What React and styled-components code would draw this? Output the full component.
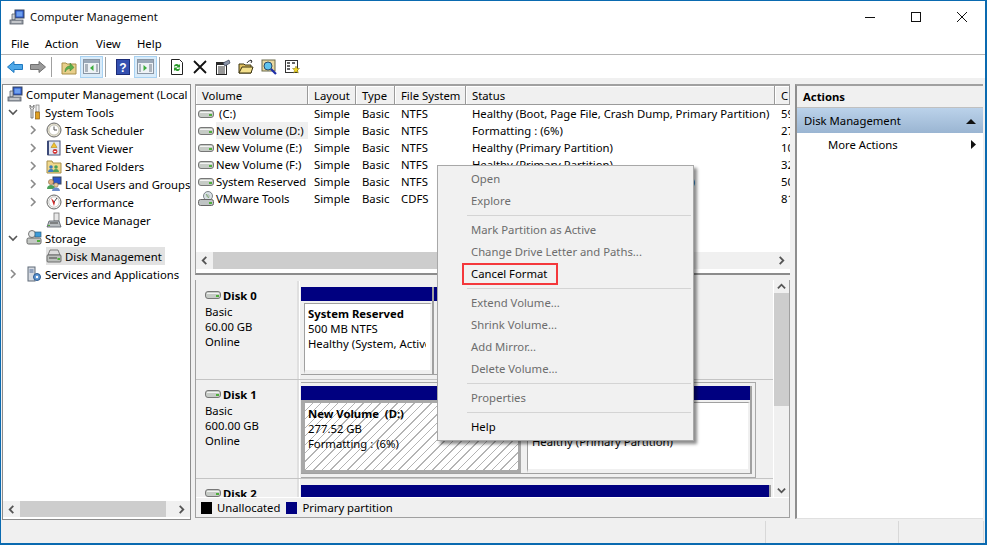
import React from 'react'
import styled, { createGlobalStyle } from 'styled-components'

const GlobalStyle = createGlobalStyle`
  html, body { margin: 0; padding: 0; background: #fff; }
  body { font-family: "Noto Sans", "Open Sans", sans-serif; font-size: 11.3px; color: #000; }
  * { box-sizing: border-box; }
`

const Window = styled.div`
  width: 987px;
  height: 545px;
  display: flex;
  flex-direction: column;
  background: #f0f0f0;
  border-style: solid;
  border-color: #0a6ab0;
  border-width: 1px 2px 2px 1px;
  overflow: hidden;
`
const TitleBar = styled.div`
  height: 31px;
  flex: none;
  display: flex;
  align-items: center;
  background: #fff;
  padding-left: 8px;
  gap: 5px;
`
const TitleText = styled.span`
  flex: 1;
  color: #111;
`
const WinControls = styled.div`
  display: flex;
`
const WinButton = styled.div`
  width: 46px;
  height: 31px;
  display: flex;
  align-items: center;
  justify-content: center;
`
const MenuBar = styled.div`
  height: 23px;
  flex: none;
  display: flex;
  align-items: center;
  background: #fff;
  border-bottom: 1px solid #b4b4b4;
  padding-left: 10px;
`
const MenuLabel = styled.span`
  width: ${p => p.$w}px;
`
const Toolbar = styled.div`
  height: 23px;
  flex: none;
  display: flex;
  align-items: center;
  background: #fff;
  padding-left: 2px;
`
const ToolButton = styled.div`
  width: 23px;
  height: 22px;
  display: flex;
  align-items: center;
  justify-content: center;
  ${p => p.$on && 'background: #d9ebf9; border: 1px solid #a8d2f2;'}
`
const ToolSep = styled.div`
  width: 1px;
  height: 20px;
  margin: 0 5px 0 2px;
  background: #a0a0a0;
`
const Body = styled.div`
  flex: 1;
  min-height: 0;
  display: flex;
  padding: 6px 0 1px 1px;
`
const TreePanel = styled.div`
  width: 189px;
  flex: none;
  display: flex;
  flex-direction: column;
  padding-bottom: 2px;
  background: #fff;
  border: 1px solid #8c8c8c;
`
const TreeList = styled.div`
  flex: 1;
  overflow: hidden;
`
const TreeRow = styled.div`
  height: 18px;
  display: flex;
  align-items: center;
  white-space: nowrap;
  padding-left: ${p => p.$pad}px;
`
const Chevron = styled.div`
  width: 18px;
  flex: none;
  display: flex;
  align-items: center;
  justify-content: flex-start;
`
const TreeLabel = styled.div`
  display: flex;
  align-items: center;
  gap: 3px;
  height: 18px;
  padding-right: 3px;
  background: ${p => (p.$sel ? '#e2e2e2' : 'transparent')};
`
const HScroll = styled.div`
  height: 16px;
  flex: none;
  display: flex;
  align-items: center;
  background: #f0f0f0;
`
const ScrollArrow = styled.div`
  width: 17px;
  height: 16px;
  flex: none;
  display: flex;
  align-items: center;
  justify-content: center;
`
const HThumb = styled.div`
  height: 100%;
  width: ${p => p.$w}px;
  background: #cdcdcd;
`
const HSpacer = styled.div`
  flex: 1;
`
const Center = styled.div`
  width: 595px;
  flex: none;
  margin-left: 4px;
  display: flex;
  flex-direction: column;
`
const ListPanel = styled.div`
  height: 191px;
  flex: none;
  display: flex;
  flex-direction: column;
  background: #fff;
  border-top: 2px solid #a0a0a0;
  border-left: 1px solid #a0a0a0;
  border-bottom: 2px solid #8c8c8c;
`
const HeaderRow = styled.div`
  display: grid;
  grid-template-columns: 112px 48px 39px 71px 309px 15px;
  height: 19px;
  flex: none;
  background: #f0f0f0;
`
const HeaderCell = styled.div`
  padding-left: 6px;
  line-height: 20px;
  overflow: hidden;
  white-space: nowrap;
  border-right: 1px solid #9a9a9a;
  border-bottom: 1px solid #9a9a9a;
  box-shadow: inset 1px 1px 0 #fff;
`
const Rows = styled.div`
  flex: 1;
`
const DataRow = styled.div`
  display: grid;
  grid-template-columns: 112px 48px 39px 71px 309px 15px;
  height: 17px;
`
const NameCell = styled.div`
  display: flex;
  align-items: center;
  height: 17px;
  padding-left: 2px;
  white-space: nowrap;
`
const NameText = styled.span`
  flex: 1;
  line-height: 17px;
  margin-left: 2px;
  padding-left: ${p => p.$indent || 0}px;
  background: ${p => (p.$sel ? '#f0f0f0' : 'transparent')};
`
const Cell = styled.div`
  padding-left: 6px;
  line-height: 17px;
  overflow: hidden;
  white-space: nowrap;
`
const ListScroll = styled(HScroll)`
  height: 17px;
  margin-bottom: 4px;
`
const DiskPanel = styled.div`
  flex: 1;
  min-height: 0;
  margin: 5px 0 2px;
  display: flex;
  flex-direction: column;
  border-left: 1px solid #a0a0a0;
  border-right: 1px solid #a0a0a0;
  border-bottom: 1px solid #a0a0a0;
`
const DiskBody = styled.div`
  flex: 1;
  min-height: 0;
  display: flex;
`
const DiskList = styled.div`
  flex: 1;
  min-width: 0;
  overflow: hidden;
`
const DiskRow = styled.div`
  height: 99px;
  display: flex;
  border-top: 1px solid #c4c4c4;
  &:first-child { border-top: 1px solid #f0f0f0; }
`
const DiskInfo = styled.div`
  width: 103px;
  flex: none;
  padding: 6px 0 0 9px;
  line-height: 15px;
  border-right: 2px solid #e0e0e0;
  box-shadow: 1px 0 0 #fff;
`
const DiskName = styled.div`
  display: flex;
  align-items: center;
  gap: 2px;
  height: 17px;
  padding-bottom: 1px;
  font-weight: 700;
`
const Layout = styled.div`
  flex: 1;
  min-width: 0;
  padding: 6px 0 0 2px;
`
const Partitions = styled.div`
  display: flex;
  width: ${p => p.$w}px;
`
const FramedPartitions = styled(Partitions)`
  margin-top: -4px;
  padding: 3px 0;
  border-top: 1px solid #a8a8a8;
  border-right: 1px solid #a8a8a8;
  border-bottom: 1px solid #a8a8a8;
`
const Partition = styled.div`
  width: ${p => p.$w}px;
  flex: none;
  height: 88px;
  display: flex;
  flex-direction: column;
  border-right: 2px solid #a0a0a0;
  border-bottom: 1px solid #a0a0a0;
`
const NavyBar = styled.div`
  height: 14px;
  flex: none;
  background: #000080;
`
const VolumeBox = styled.div`
  flex: 1;
  min-width: 0;
  margin: 2px 0 0 3px;
  padding: 2px 4px 0 3px;
  line-height: 15px;
  overflow: hidden;
  background: #fff;
  border-style: solid;
  border-color: #a0a0a0 #f0f0f0 #f0f0f0 #a0a0a0;
  border-width: 1px 2px 4px 1px;
`
const HatchedBox = styled(VolumeBox)`
  width: 220px;
  flex: none;
  margin: 0;
  padding: 3px 0 0 3px;
  background: repeating-linear-gradient(135deg, #fff 0 5px, #b4b4b4 5px 6px);
  border-color: #a8a8a8;
  border-width: 3px 3px 3px 4px;
`
const SecondBox = styled(VolumeBox)`
  margin-left: 6px;
  padding: 1px 0 0 4px;
`
const PartitionSplit = styled.div`
  flex: 1;
  display: flex;
`
const VolumeName = styled.div`
  font-weight: 700;
  white-space: nowrap;
  overflow: hidden;
`
const VolumeLine = styled.div`
  white-space: nowrap;
  overflow: hidden;
`
const VScroll = styled.div`
  width: 15px;
  flex: none;
  display: flex;
  flex-direction: column;
  background: #f0f0f0;
  box-shadow: -1px 0 0 #fff;
`
const VArrow = styled.div`
  height: 13px;
  flex: none;
  display: flex;
  align-items: center;
  justify-content: center;
`
const VThumb = styled.div`
  height: 113px;
  flex: none;
  background: #cdcdcd;
`
const VSpacer = styled.div`
  flex: 1;
`
const Legend = styled.div`
  height: 20px;
  flex: none;
  display: flex;
  align-items: center;
  padding-left: 5px;
  background: #f0f0f0;
  border-top: 1px solid #fff;
`
const Swatch = styled.div`
  width: 11px;
  height: 12px;
  background: ${p => p.$c};
  margin-right: 5px;
`
const LegendText = styled.span`
  margin-right: 6px;
`
const ActionsPanel = styled.div`
  flex: 1;
  margin: 0 2px 1px 5px;
  display: flex;
  flex-direction: column;
  background: #fff;
  border-top: 2px solid #a0a0a0;
  border-left: 2px solid #8e8e8e;
  border-bottom: 1px solid #e0e0e0;
`
const ActionsHead = styled.div`
  height: 22px;
  flex: none;
  padding-left: 6px;
  line-height: 21px;
  font-weight: 700;
  background: #f0f0f0;
  border-bottom: 1px solid #c0c0c0;
`
const ActionsBar = styled.div`
  height: 25px;
  flex: none;
  display: flex;
  align-items: center;
  justify-content: space-between;
  padding: 0 7px;
  background: linear-gradient(#bbd2ea, #9ab5d2);
`
const ActionItem = styled.div`
  height: 22px;
  display: flex;
  align-items: center;
  justify-content: space-between;
  padding: 0 7px 0 31px;
`
const StatusBar = styled.div`
  height: 22px;
  flex: none;
  display: flex;
  justify-content: flex-end;
  padding-right: 1px;
`
const StatusCell = styled.div`
  width: ${p => p.$w}px;
  border-left: 1px solid #d8d8d8;
  ${p => p.$end && 'border-right: 1px solid #d8d8d8;'}
`
const ContextMenu = styled.div`
  position: absolute;
  left: 437px;
  top: 165px;
  width: 257px;
  padding: 2px;
  background: #f1f1f1;
  border: 1px solid #a8a8a8;
  box-shadow: 3px 3px 3px rgba(0, 0, 0, 0.45);
`
const MenuItem = styled.div`
  position: relative;
  height: 22px;
  line-height: 22px;
  padding-left: 31px;
  color: ${p => (p.$off ? '#6d6d6d' : '#000')};
`
const MenuSep = styled.div`
  height: 1px;
  margin: 3px 0 3px 27px;
  background: #d4d4d4;
`
const RedBox = styled.div`
  position: absolute;
  left: 22px;
  top: 0;
  width: 96px;
  height: 22px;
  border: 2px solid #f4383c;
`

const Svg = ({ size = 16, children }) => (
  <svg width={size} height={size} viewBox="0 0 16 16" style={{ flex: 'none', display: 'block' }}>{children}</svg>
)

const ChevronIcon = ({ open, color = '#8a8a8a' }) => (
  <svg width="10" height="10" viewBox="0 0 10 10">
    <path d={open ? 'M1 3l4 4 4-4' : 'M3 1l4 4-4 4'} fill="none" stroke={open ? '#555' : color} strokeWidth="1.6" />
  </svg>
)
const ArrowIcon = ({ d }) => (
  <svg width="9" height="9" viewBox="0 0 10 10">
    <path d={d} fill="none" stroke="#555" strokeWidth="2" />
  </svg>
)

const ComputerIcon = () => (
  <Svg>
    <rect x="6" y="1" width="9" height="8" fill="#2a55c8" stroke="#38465c" />
    <rect x="7.5" y="2.5" width="6" height="5" fill="#6ea0ee" />
    <path d="M3 5h3v6H3z" fill="#c9ccd2" stroke="#5e6470" strokeWidth=".8" />
    <rect x="1" y="11" width="13" height="4" fill="#9fa4ac" stroke="#565c66" strokeWidth=".8" />
    <path d="M3 13h9" stroke="#e8e8e8" />
  </Svg>
)
const DriveIcon = () => (
  <Svg>
    <rect x="0.5" y="4.5" width="15" height="7" rx="2.5" fill="#c6cbc6" stroke="#777" />
    <path d="M2 6.5h12" stroke="#f2f2f2" />
    <rect x="11" y="8" width="3" height="2" fill="#4fae3c" />
  </Svg>
)
const CdIcon = () => (
  <Svg>
    <circle cx="10" cy="5" r="4.5" fill="#d8e0e4" stroke="#7c8488" />
    <circle cx="10" cy="5" r="1.2" fill="#fff" stroke="#7c8488" strokeWidth=".6" />
    <path d="M8 3l3 4" stroke="#7fb070" />
    <rect x="0.5" y="8.5" width="15" height="6" rx="2" fill="#bfc4c4" stroke="#666" />
    <rect x="11" y="11" width="3" height="2" fill="#4fae3c" />
  </Svg>
)
const ToolsIcon = () => (
  <Svg>
    <path d="M4 1v3l1 1v9h2V5l1-1V1L7 3H5z" fill="#e8e8e8" stroke="#666" strokeWidth=".8" />
    <rect x="10" y="1" width="3" height="7" fill="#f2f2f2" stroke="#777" strokeWidth=".7" />
    <rect x="9.5" y="8" width="4" height="7" fill="#e0a020" stroke="#8a5a10" strokeWidth=".7" />
  </Svg>
)
const ClockIcon = () => (
  <Svg>
    <circle cx="8" cy="8" r="7" fill="#e4e0d0" stroke="#6a6a6a" />
    <circle cx="8" cy="8" r="5" fill="#fff" stroke="#b4b4a4" strokeWidth=".7" />
    <path d="M8 4.5V8h3" fill="none" stroke="#555" />
  </Svg>
)
const EventIcon = () => (
  <Svg>
    <rect x="2" y="1" width="12" height="14" fill="#dfe4f0" stroke="#49557a" />
    <path d="M2 1v14" stroke="#3c4a78" strokeWidth="2" />
    <path d="M8 2.5l3 5H5z" fill="#f4c430" stroke="#9a7a10" strokeWidth=".5" />
    <circle cx="9" cy="11.5" r="2.4" fill="#d23838" />
    <path d="M7.8 11.5h2.4" stroke="#fff" />
  </Svg>
)
const SharedIcon = () => (
  <Svg>
    <path d="M1 3h5l1 2h8v10H1z" fill="#f0d88c" stroke="#a8904c" />
    <circle cx="5" cy="9" r="1.8" fill="#3a7ac0" />
    <path d="M2 14c0-2 1.5-3 3-3s3 1 3 3z" fill="#3a7ac0" />
    <circle cx="10" cy="9" r="1.8" fill="#4aa05a" />
    <path d="M7 14c0-2 1.5-3 3-3s3 1 3 3z" fill="#4aa05a" />
  </Svg>
)
const UsersIcon = () => (
  <Svg>
    <rect x="7" y="1" width="8" height="7" fill="#2a55c8" stroke="#38465c" />
    <circle cx="5" cy="6" r="2.6" fill="#e0b080" stroke="#7a5a38" strokeWidth=".5" />
    <path d="M1 13c0-3 2-4 4-4s4 1 4 4z" fill="#4aa05a" />
    <circle cx="10" cy="9" r="2.2" fill="#e8c8a0" stroke="#7a5a38" strokeWidth=".5" />
    <path d="M6 15c0-2.5 2-3.5 4-3.5s4 1 4 3.5z" fill="#6a8cc8" />
  </Svg>
)
const PerfIcon = () => (
  <Svg>
    <circle cx="8" cy="8" r="7" fill="#f4f4f0" stroke="#666" />
    <circle cx="8" cy="8" r="5.2" fill="#fff" stroke="#aaa" strokeWidth=".6" />
    <path d="M5 4l4 4-1 4z" fill="#d02828" />
    <path d="M11 4L8 8" stroke="#444" />
  </Svg>
)
const DeviceIcon = () => (
  <Svg>
    <rect x="8" y="1" width="5" height="8" fill="#e8e8e8" stroke="#777" strokeWidth=".8" />
    <path d="M1 15l2-6h10l2 6z" fill="#b8bcc0" stroke="#565c66" strokeWidth=".8" />
    <path d="M4 11h8" stroke="#444" />
    <rect x="2" y="13" width="2" height="1" fill="#4fae3c" />
  </Svg>
)
const StorageIcon = () => (
  <Svg>
    <circle cx="6" cy="4" r="3.5" fill="#dfe3e3" stroke="#777" />
    <rect x="9" y="2" width="6" height="5" fill="#3a9ad8" stroke="#35607c" strokeWidth=".7" />
    <rect x="1" y="8" width="14" height="6" rx="1.5" fill="#c4c8c4" stroke="#666" />
    <rect x="11" y="10" width="3" height="2" fill="#4fae3c" />
  </Svg>
)
const DiskMgmtIcon = () => (
  <Svg>
    <path d="M2 7l2-5h8l2 5z" fill="#dcdcdc" stroke="#666" strokeWidth=".8" />
    <rect x="1" y="7" width="14" height="7" rx="1" fill="#bcbfbc" stroke="#555" strokeWidth=".8" />
    <path d="M3 10h8" stroke="#444" />
    <rect x="11.5" y="10" width="2.5" height="2" fill="#4fae3c" />
  </Svg>
)
const ServicesIcon = () => (
  <Svg>
    <rect x="2" y="1" width="7" height="14" fill="#d6dae0" stroke="#5f6a78" />
    <path d="M3.5 4h4M3.5 6h4" stroke="#4a6a9c" />
    <circle cx="11" cy="11" r="3.5" fill="#5a92d0" stroke="#2c5a90" />
    <circle cx="11" cy="11" r="1.2" fill="#fff" />
  </Svg>
)

const BackIcon = () => (
  <Svg>
    <path d="M0.5 8L7 2.5V5.5h8.5v5H7v3z" fill="#4ea8e8" stroke="#1e78c0" />
  </Svg>
)
const ForwardIcon = () => (
  <Svg>
    <path d="M15.5 8L9 2.5V5.5H.5v5H9v3z" fill="#9a9a9a" stroke="#707070" />
  </Svg>
)
const UpIcon = () => (
  <Svg>
    <path d="M1 4h4l1 1h9v10H1z" fill="#e8cf8a" stroke="#a88e48" />
    <path d="M4 13c0-4 2-6 5-6V4l4 4.5L9 12V9.5c-2 0-4 1.5-5 3.5z" fill="#5cb04c" stroke="#3a8030" strokeWidth=".5" />
  </Svg>
)
const PaneLeftIcon = () => (
  <svg width="17" height="15" viewBox="0 0 17 15">
    <rect x=".5" y=".5" width="16" height="14" fill="#eef2f6" stroke="#8a96a4" />
    <rect x="1" y="1" width="15" height="3" fill="#9aa8b8" />
    <path d="M2 6h3M2 8h3M2 10h3M2 12h3M13 6h2M13 8h2M13 10h2M13 12h2" stroke="#6a7684" />
    <path d="M10.5 6v6l-3.5-3z" fill="#3cab3c" />
  </svg>
)
const PaneRightIcon = () => (
  <svg width="17" height="15" viewBox="0 0 17 15">
    <rect x=".5" y=".5" width="16" height="14" fill="#eef2f6" stroke="#8a96a4" />
    <rect x="1" y="1" width="15" height="3" fill="#9aa8b8" />
    <path d="M2 6h2M2 8h2M2 10h2M2 12h2M12 6h3M12 8h3M12 10h3M12 12h3" stroke="#6a7684" />
    <path d="M6.5 6v6l3.5-3z" fill="#3cab3c" />
  </svg>
)
const HelpIcon = () => (
  <svg width="14" height="16" viewBox="0 0 14 16">
    <rect x=".5" y=".5" width="13" height="15" fill="#3450b0" stroke="#1c2c78" />
    <text x="7" y="12.5" fontSize="12" fontWeight="700" fill="#fff" textAnchor="middle" fontFamily="Liberation Sans, sans-serif">?</text>
  </svg>
)
const RefreshIcon = () => (
  <Svg>
    <path d="M2.5.5h8l3 3v12h-11z" fill="#fff" stroke="#222" />
    <path d="M5 7c.5-2 3-3 5-1l1-1v3.5H7.5l1-1C7.5 6.5 6 7 5.8 8z" fill="#2a9a2a" />
    <path d="M11 10c-.5 2-3 3-5 1l-1 1V8.5h3.5l-1 1c1 1 2.5.5 2.7-.5z" fill="#2a9a2a" />
  </Svg>
)
const DeleteIcon = () => (
  <Svg>
    <path d="M2 2l12 12M14 2L2 14" stroke="#111" strokeWidth="1.8" />
  </Svg>
)
const PropsIcon = () => (
  <Svg>
    <rect x="1.5" y="5.5" width="10" height="10" fill="#fff" stroke="#222" />
    <path d="M3 8h7M3 10h7M3 12h7M3 14h7" stroke="#333" />
    <rect x="1" y="3" width="11" height="3" fill="#2a2a2a" />
    <path d="M8 4l6-3 1 3-5 3z" fill="#8a94a8" stroke="#3a4258" strokeWidth=".7" />
  </Svg>
)
const OpenIcon = () => (
  <Svg>
    <path d="M1 5h5l1 1h6v8H1z" fill="#e0c060" stroke="#3c3410" />
    <path d="M1 14l3-6h11l-2 6z" fill="#f4e08c" stroke="#3c3410" />
    <path d="M9 4c1-2 3-3 5-2M14 2l-2-1M14 2l-1 2" fill="none" stroke="#333" />
  </Svg>
)
const SearchIcon = () => (
  <Svg>
    <rect x="1" y="1" width="13" height="11" fill="#e8d8a0" stroke="#6a6a4a" />
    <circle cx="7" cy="7" r="4" fill="#5ec4ee" stroke="#2a4a6a" />
    <path d="M10 10l5 5" stroke="#1e2ea8" strokeWidth="2.2" />
  </Svg>
)
const WizardIcon = () => (
  <Svg>
    <rect x="1.5" y="1.5" width="12" height="12" fill="#fff" stroke="#333" />
    <path d="M3 4h3M8 4h3M3 7h3M3 10h3" stroke="#333" strokeWidth="1.5" />
    <path d="M12 7l1 2.5 2.5 0-2 1.7.8 2.8-2.3-1.6-2.3 1.6.8-2.8-2-1.7 2.5 0z" fill="#f4d820" stroke="#8a7a10" strokeWidth=".5" />
  </Svg>
)

const tree = [
  { pad: 4, icon: <ComputerIcon />, label: 'Computer Management (Local' },
  { pad: 5, chev: 'open', icon: <ToolsIcon />, label: 'System Tools' },
  { pad: 25, chev: 'closed', icon: <ClockIcon />, label: 'Task Scheduler' },
  { pad: 25, chev: 'closed', icon: <EventIcon />, label: 'Event Viewer' },
  { pad: 25, chev: 'closed', icon: <SharedIcon />, label: 'Shared Folders' },
  { pad: 25, chev: 'closed', icon: <UsersIcon />, label: 'Local Users and Groups' },
  { pad: 25, chev: 'closed', icon: <PerfIcon />, label: 'Performance' },
  { pad: 25, chev: 'none', icon: <DeviceIcon />, label: 'Device Manager' },
  { pad: 5, chev: 'open', icon: <StorageIcon />, label: 'Storage' },
  { pad: 25, chev: 'none', icon: <DiskMgmtIcon />, label: 'Disk Management', sel: true },
  { pad: 5, chev: 'closed', icon: <ServicesIcon />, label: 'Services and Applications' },
]

const volumes = [
  ['(C:)', 'NTFS', 'Healthy (Boot, Page File, Crash Dump, Primary Partition)', '59.51 GB', 3],
  ['New Volume (D:)', 'NTFS', 'Formatting : (6%)', '277.52 GB', 0, true],
  ['New Volume (E:)', 'NTFS', 'Healthy (Primary Partition)', '10.00 GB'],
  ['New Volume (F:)', 'NTFS', 'Healthy (Primary Partition)', '32.48 GB'],
  ['System Reserved', 'NTFS', 'Healthy (System, Active, Primary Partition)', '500 MB'],
  ['VMware Tools', 'CDFS', 'Healthy (Primary Partition)', '81 MB'],
]

function App() {
  return (
    <>
      <GlobalStyle />
      <Window>
        <TitleBar>
          <ComputerIcon />
          <TitleText>Computer Management</TitleText>
          <WinControls>
            <WinButton>
              <svg width="10" height="10" viewBox="0 0 10 10"><path d="M0 5.5h10" stroke="#111" /></svg>
            </WinButton>
            <WinButton>
              <svg width="10" height="10" viewBox="0 0 10 10"><rect x=".5" y=".5" width="9" height="9" fill="none" stroke="#111" /></svg>
            </WinButton>
            <WinButton>
              <svg width="10" height="10" viewBox="0 0 10 10"><path d="M0 0l10 10M10 0L0 10" stroke="#111" /></svg>
            </WinButton>
          </WinControls>
        </TitleBar>
        <MenuBar>
          <MenuLabel $w={34}>File</MenuLabel>
          <MenuLabel $w={51}>Action</MenuLabel>
          <MenuLabel $w={41}>View</MenuLabel>
          <MenuLabel $w={40}>Help</MenuLabel>
        </MenuBar>
        <Toolbar>
          <ToolButton><BackIcon /></ToolButton>
          <ToolButton><ForwardIcon /></ToolButton>
          <ToolSep />
          <ToolButton><UpIcon /></ToolButton>
          <ToolButton $on><PaneLeftIcon /></ToolButton>
          <ToolSep />
          <ToolButton><HelpIcon /></ToolButton>
          <ToolButton $on><PaneRightIcon /></ToolButton>
          <ToolSep />
          <ToolButton><RefreshIcon /></ToolButton>
          <ToolButton><DeleteIcon /></ToolButton>
          <ToolButton><PropsIcon /></ToolButton>
          <ToolButton><OpenIcon /></ToolButton>
          <ToolButton><SearchIcon /></ToolButton>
          <ToolButton><WizardIcon /></ToolButton>
        </Toolbar>
        <Body>
          <TreePanel>
            <TreeList>
              {tree.map(row => (
                <TreeRow key={row.label} $pad={row.pad}>
                  {row.chev && (
                    <Chevron>
                      {row.chev !== 'none' && <ChevronIcon open={row.chev === 'open'} />}
                    </Chevron>
                  )}
                  <TreeLabel $sel={row.sel}>
                    {row.icon}
                    <span>{row.label}</span>
                  </TreeLabel>
                </TreeRow>
              ))}
            </TreeList>
            <HScroll>
              <ScrollArrow><ArrowIcon d="M7 1L3 5l4 4" /></ScrollArrow>
              <HThumb $w={146} />
              <HSpacer />
              <ScrollArrow><ArrowIcon d="M3 1l4 4-4 4" /></ScrollArrow>
            </HScroll>
          </TreePanel>
          <Center>
            <ListPanel>
              <HeaderRow>
                {['Volume', 'Layout', 'Type', 'File System', 'Status', 'C'].map(h => (
                  <HeaderCell key={h}>{h}</HeaderCell>
                ))}
              </HeaderRow>
              <Rows>
                {volumes.map(([name, fs, status, cap, indent, sel]) => (
                  <DataRow key={name}>
                    <NameCell>
                      {name === 'VMware Tools' ? <CdIcon /> : <DriveIcon />}
                      <NameText $indent={indent} $sel={sel}>{name}</NameText>
                    </NameCell>
                    <Cell>Simple</Cell>
                    <Cell>Basic</Cell>
                    <Cell>{fs}</Cell>
                    <Cell>{status}</Cell>
                    <Cell>{cap}</Cell>
                  </DataRow>
                ))}
              </Rows>
              <ListScroll>
                <ScrollArrow><ArrowIcon d="M7 1L3 5l4 4" /></ScrollArrow>
                <HThumb $w={340} />
                <HSpacer />
                <ScrollArrow><ArrowIcon d="M3 1l4 4-4 4" /></ScrollArrow>
              </ListScroll>
            </ListPanel>
            <DiskPanel>
              <DiskBody>
                <DiskList>
                  <DiskRow>
                    <DiskInfo>
                      <DiskName><DriveIcon />Disk 0</DiskName>
                      <div>Basic</div>
                      <div>60.00 GB</div>
                      <div>Online</div>
                    </DiskInfo>
                    <Layout>
                      <Partitions $w={460}>
                        <Partition $w={133}>
                          <NavyBar />
                          <VolumeBox>
                            <VolumeName>System Reserved</VolumeName>
                            <VolumeLine>500 MB NTFS</VolumeLine>
                            <VolumeLine>Healthy (System, Active, Primary Partition)</VolumeLine>
                          </VolumeBox>
                        </Partition>
                        <Partition $w={250}>
                          <NavyBar />
                          <VolumeBox />
                        </Partition>
                      </Partitions>
                    </Layout>
                  </DiskRow>
                  <DiskRow>
                    <DiskInfo>
                      <DiskName><DriveIcon />Disk 1</DiskName>
                      <div>Basic</div>
                      <div>600.00 GB</div>
                      <div>Online</div>
                    </DiskInfo>
                    <Layout>
                      <FramedPartitions $w={455}>
                        <Partition $w={451}>
                          <NavyBar />
                          <PartitionSplit>
                            <HatchedBox>
                              <VolumeName>New Volume&nbsp; (D:)</VolumeName>
                              <VolumeLine>277.52 GB</VolumeLine>
                              <VolumeLine>Formatting : (6%)</VolumeLine>
                            </HatchedBox>
                            <SecondBox>
                              <VolumeName>New Volume (E:)</VolumeName>
                              <VolumeLine>322.48 GB NTFS</VolumeLine>
                              <VolumeLine>Healthy (Primary Partition)</VolumeLine>
                            </SecondBox>
                          </PartitionSplit>
                        </Partition>
                      </FramedPartitions>
                    </Layout>
                  </DiskRow>
                  <DiskRow>
                    <DiskInfo>
                      <DiskName><DriveIcon />Disk 2</DiskName>
                    </DiskInfo>
                    <Layout>
                      <Partitions $w={470}>
                        <Partition $w={470}>
                          <NavyBar />
                        </Partition>
                      </Partitions>
                    </Layout>
                  </DiskRow>
                </DiskList>
                <VScroll>
                  <VArrow><ArrowIcon d="M1 7l4-4 4 4" /></VArrow>
                  <VThumb />
                  <VSpacer />
                  <VArrow><ArrowIcon d="M1 3l4 4 4-4" /></VArrow>
                </VScroll>
              </DiskBody>
              <Legend>
                <Swatch $c="#000" />
                <LegendText>Unallocated</LegendText>
                <Swatch $c="#000080" />
                <LegendText>Primary partition</LegendText>
              </Legend>
            </DiskPanel>
          </Center>
          <ActionsPanel>
            <ActionsHead>Actions</ActionsHead>
            <ActionsBar>
              <span>Disk Management</span>
              <svg width="10" height="6" viewBox="0 0 10 6"><path d="M0 6l5-5 5 5z" fill="#111" /></svg>
            </ActionsBar>
            <ActionItem>
              <span>More Actions</span>
              <svg width="5" height="9" viewBox="0 0 5 9"><path d="M0 0l5 4.5L0 9z" fill="#111" /></svg>
            </ActionItem>
          </ActionsPanel>
        </Body>
        <StatusBar>
          <StatusCell $w={133} />
          <StatusCell $w={86} $end />
        </StatusBar>
        <ContextMenu>
          <MenuItem $off>Open</MenuItem>
          <MenuItem $off>Explore</MenuItem>
          <MenuSep />
          <MenuItem $off>Mark Partition as Active</MenuItem>
          <MenuItem $off>Change Drive Letter and Paths...</MenuItem>
          <MenuItem>
            Cancel Format
            <RedBox />
          </MenuItem>
          <MenuSep />
          <MenuItem $off>Extend Volume...</MenuItem>
          <MenuItem $off>Shrink Volume...</MenuItem>
          <MenuItem $off>Add Mirror...</MenuItem>
          <MenuItem $off>Delete Volume...</MenuItem>
          <MenuSep />
          <MenuItem $off>Properties</MenuItem>
          <MenuSep />
          <MenuItem>Help</MenuItem>
        </ContextMenu>
      </Window>
    </>
  )
}

export default App
